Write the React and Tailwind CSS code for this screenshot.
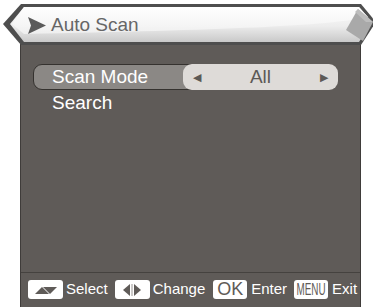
import React from 'react';

const font = { fontFamily: '"Liberation Sans", Arial, sans-serif' };

const HeaderShape = () => (
  <svg className="absolute inset-0" width="373" height="46" viewBox="0 0 373 46">
    <defs>
      <linearGradient id="hdr" x1="0" y1="0" x2="0" y2="1">
        <stop offset="0" stopColor="#fdfdfd" />
        <stop offset="0.55" stopColor="#ececec" />
        <stop offset="1" stopColor="#c9c9c9" />
      </linearGradient>
      <linearGradient id="shine" x1="0" y1="0" x2="0" y2="1">
        <stop offset="0" stopColor="#ffffff" />
        <stop offset="1" stopColor="#f2f2f2" />
      </linearGradient>
    </defs>
    {/* outer dark chevron */}
    <polygon points="3,24 21,4 361,4 376,22 361,45 21,45" fill="#4e4e4e" />
    <polygon points="10,24 24,7 359,7 372,22 359,42 24,42" fill="url(#hdr)" />
    {/* upper highlight curve */}
    <path d="M24,7 L359,7 L368,17 C330,26 220,30 24,34 L12,24 Z" fill="url(#shine)" opacity="0.85" />
    {/* right diamond */}
    <polygon points="358,9 373,22 363,41 346,30" fill="#a9a9a9" />
    <polygon points="358,9 373,22 366,22 355,12" fill="#bdbdbd" />
    {/* arrow */}
    <polygon points="28,17 46,25.5 28,34 31,25.5" fill="#5a5a5a" />
  </svg>
);

const UpDown = () => (
  <svg width="22" height="10" viewBox="0 0 22 10">
    <polygon points="0,9 7,2 14,9" fill="#5f5b58" />
    <polygon points="8,2 22,2 15,9" fill="#5f5b58" />
  </svg>
);

const LeftRight = () => (
  <svg width="18" height="12" viewBox="0 0 18 12">
    <polygon points="7,0 7,12 0,6" fill="#5f5b58" />
    <rect x="8.5" y="0" width="1" height="12" fill="#9a9693" />
    <polygon points="11,0 11,12 18,6" fill="#5f5b58" />
  </svg>
);

export default function App() {
  return (
    <div className="w-[373px] h-[307px] bg-white overflow-hidden flex flex-col" style={font}>
      <div className="relative h-[46px] shrink-0">
        <HeaderShape />
        <div className="relative h-full flex items-center pl-[51px] pt-[4px] text-[19px] text-[#666666]">
          Auto Scan
        </div>
      </div>

      <div className="ml-[20px] w-[341px] flex-1 -mt-[2px] bg-[#5f5b58] border-x border-[#3f3c3a] flex flex-col">
        <div className="pt-[20px] pl-[12px] pr-[22px] flex flex-col">
          <div className="flex h-[26px]">
            <div className="w-[158px] h-full bg-[#8b8885] border border-[#35322f] rounded-l-[9px] flex items-center pl-[18px] text-[19px] text-white">
              Scan Mode
            </div>
            <div className="-ml-[8px] flex-1 h-full bg-[#dedbd8] rounded-[9px] flex items-center justify-between px-[10px] text-[19px] text-[#5c5956]">
              <span className="text-[11px]">◀</span>
              <span>All</span>
              <span className="text-[11px]">▶</span>
            </div>
          </div>
          <div className="h-[26px] flex items-center pl-[19px] text-[19px] text-white">Search</div>
        </div>

        <div className="mt-auto border-t border-[#45423f] h-[35px] flex items-center pl-[7px] pb-[1px] text-[15px] text-white">
          <div className="w-[35px] h-[19px] bg-white rounded-[3px] flex items-center justify-center">
            <UpDown />
          </div>
          <span className="ml-[3px]">Select</span>
          <div className="ml-[7px] w-[35px] h-[19px] bg-white rounded-[3px] flex items-center justify-center">
            <LeftRight />
          </div>
          <span className="ml-[3px]">Change</span>
          <div className="ml-[8px] w-[34px] h-[19px] bg-white rounded-[3px] flex items-center justify-center text-[18px] text-[#5f5b58]">
            OK
          </div>
          <span className="ml-[4px]">Enter</span>
          <div className="ml-[7px] w-[34px] h-[19px] bg-white rounded-[3px] flex items-center justify-center text-[#5f5b58] overflow-hidden">
            <span className="text-[17px] leading-none scale-x-[0.58] inline-block">MENU</span>
          </div>
          <span className="ml-[4px]">Exit</span>
        </div>
      </div>
    </div>
  );
}
